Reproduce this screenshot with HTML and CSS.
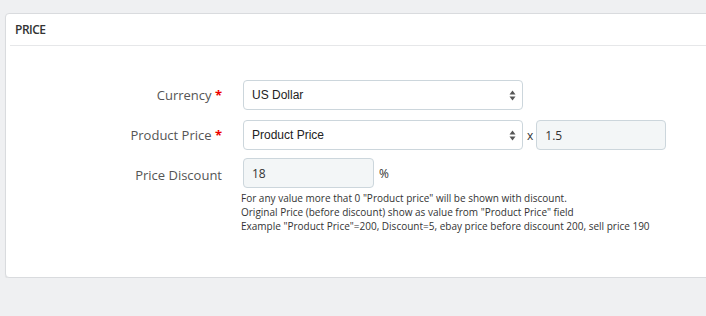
FILE: index.html
```html
<!DOCTYPE html>
<html lang="en">
<head>
    <meta charset="UTF-8">
    <title>Price</title>
    <link rel="stylesheet" href="styles.css">
</head>
<body>
    <div class="panel">
        <div class="panel-heading">Price</div>
        <div class="panel-body">
            <div class="form-row">
                <label class="form-label">Currency <span class="required">*</span></label>
                <div class="form-field">
                    <div class="select-box">
                        <span>US Dollar</span>
                        <svg class="arrows" width="7" height="11" viewBox="0 0 7 11"><path d="M3.5 0.5L6.5 4.5H0.5Z M3.5 10.5L6.5 6.5H0.5Z" fill="#555"/></svg>
                    </div>
                </div>
            </div>
            <div class="form-row">
                <label class="form-label">Product Price <span class="required">*</span></label>
                <div class="form-field">
                    <div class="select-box">
                        <span>Product Price</span>
                        <svg class="arrows" width="7" height="11" viewBox="0 0 7 11"><path d="M3.5 0.5L6.5 4.5H0.5Z M3.5 10.5L6.5 6.5H0.5Z" fill="#555"/></svg>
                    </div>
                    <span class="unit times">x</span>
                    <input class="text-input multiplier" type="text" value="1.5">
                </div>
            </div>
            <div class="form-row discount-row">
                <label class="form-label">Price Discount</label>
                <div class="form-field">
                    <input class="text-input discount" type="text" value="18">
                    <span class="unit percent">%</span>
                </div>
            </div>
            <div class="help">
                For any value more that 0 "Product price" will be shown with discount.<br>
                Original Price (before discount) show as value from "Product Price" field<br>
                Example "Product Price"=200, Discount=5, ebay price before discount 200, sell price 190
            </div>
        </div>
    </div>
</body>
</html>
```

FILE: styles.css
```css
body {
    margin: 0;
    background-color: #eff0f2;
    font-family: "Open Sans", sans-serif;
    overflow: hidden;
}

.panel {
    margin: 13px 0 0 5px;
    width: 730px;
    background-color: #fff;
    border: 1px solid #d9dbde;
    border-radius: 4px;
    box-shadow: 0 1px 1px rgba(0, 0, 0, 0.06);
}

.panel-heading {
    margin: 0 0 0 4px;
    padding: 0 0 0 5px;
    height: 31px;
    line-height: 31px;
    border-bottom: 1px solid #e6e7e9;
    font-size: 12px;
    font-weight: 600;
    letter-spacing: -0.5px;
    text-transform: uppercase;
    color: #333;
}

.panel-body {
    padding: 34px 0 44px;
}

.form-row {
    display: flex;
    align-items: center;
    margin-bottom: 10px;
}

.discount-row {
    margin-top: -2px;
    margin-bottom: 0;
}

.discount-row .form-label {
    padding-top: 3px;
}

.form-label {
    width: 216px;
    text-align: right;
    font-size: 13px;
    color: #555;
}

.required {
    color: #e00;
    font-weight: 700;
}

.form-field {
    display: flex;
    align-items: center;
    margin-left: 21px;
}

.select-box {
    display: flex;
    align-items: center;
    justify-content: space-between;
    box-sizing: border-box;
    width: 280px;
    height: 30px;
    padding: 0 6px 0 8px;
    border: 1px solid #ccd6dc;
    border-radius: 4px;
    background-color: #fff;
    font-family: "Liberation Sans", Arial, sans-serif;
    font-size: 12px;
    color: #222;
}

.text-input {
    box-sizing: border-box;
    height: 30px;
    padding: 0 8px;
    border: 1px solid #ccd6dc;
    border-radius: 4px;
    background-color: #f3f6f7;
    font-family: "Open Sans", sans-serif;
    font-size: 12px;
    color: #333;
}

.multiplier {
    width: 130px;
}

.discount {
    width: 131px;
}

.unit {
    font-size: 12px;
    color: #333;
}

.times {
    margin: 0 3px 0 4px;
}

.percent {
    margin-left: 5px;
}

.help {
    margin: 3px 0 0 235px;
    font-size: 10px;
    line-height: 14px;
    color: #333;
}
```
